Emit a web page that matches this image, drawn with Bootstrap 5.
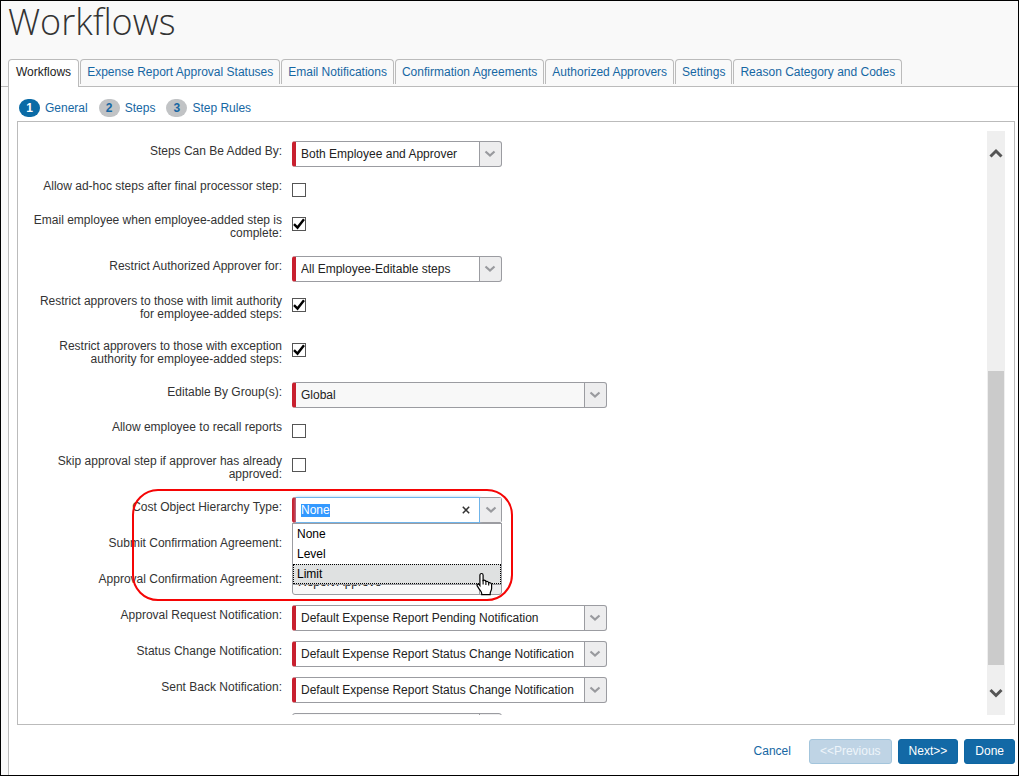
<!DOCTYPE html>
<html lang="en">
<head>
<meta charset="utf-8">
<meta name="viewport" content="width=device-width, initial-scale=1">
<title>Workflows</title>
<link href="https://cdn.jsdelivr.net/npm/bootstrap@5.3.0/dist/css/bootstrap.min.css" rel="stylesheet">
<style>
  body { font-family: "Liberation Sans", Arial, sans-serif; font-size: 12px; line-height: 13px; color: #333; background: #f9f9f9; }
  a { color: #1667a3; text-decoration: none; }
  .app-frame { border: 1px solid #000; }
  .page-title { font-family: "Open Sans", sans-serif; font-weight: 300; font-size: 36px; line-height: 42px; color: #333; padding: 0 7px; margin: 0 0 16px; }
  .nav-tabs { --bs-nav-tabs-border-width: 0; padding-left: 7px; gap: 1px; border-bottom: 1px solid #bbb; }
  .nav-tabs .nav-link { border: 1px solid #bbb; border-bottom: 0; border-radius: 4px 4px 0 0; padding: 6px 6px 5px; margin: 0 0 2px; color: #1667a3; background: #f9f9f9; }
  .nav-tabs .nav-link.active { color: #222; background: #fff; margin-bottom: -1px; padding: 6px 7px 8px; border-color: #bbb; }
  .tab-body { margin-left: 7px; border-left: 1px solid #bbb; background: #fff; padding: 12px 3px 11px 8px; }
  .wizard-steps { gap: 11px; padding-left: 2px; margin-bottom: 4px; }
  .step-num { width: 21px; height: 18px; line-height: 18px; border-radius: 9px; background: #c1c3c5; font-weight: 700; text-align: center; margin-right: 5px; }
  .current .step-num { background: #0a6ba6; color: #fff; }
  .form-panel { border: 1px solid #bbb; padding: 9px 9px 9px 12px; }
  .form-scroll { flex: 1 1 0; min-height: 0; }
  .fields { padding-top: 10px; }
  .field-row { min-height: 36px; gap: 10px; }
  .tick-row { min-height: 34px; }
  .tall-row { min-height: 45px; }
  .field-name { width: 252px; flex: none; text-align: right; padding-top: 4px; }
  .tick-row .field-name { padding-top: 3px; }
  .pick { appearance: none; height: 26px; width: 210px; border: 1px solid #9b9ca1; border-radius: 3px; padding: 0 26px 0 5px; color: #222; outline: 0;
    background: url("data:image/svg+xml,%3Csvg xmlns='http://www.w3.org/2000/svg' width='12' height='8'%3E%3Cpath d='M1.5 1.5 6 5.5 10.5 1.5' fill='none' stroke='%23999a9e' stroke-width='2.2'/%3E%3C/svg%3E") right 5px center no-repeat,
      linear-gradient(90deg, #9b9ca1 1px, #ededee 1px) right / 22px 100% no-repeat, #fff; }
  .pick-wide { width: 315px; }
  .required { border-left: 4px solid #c8202f; padding-left: 5px; }
  .pick-locked { background-color: #f8f8f8; }
  .tick { appearance: none; width: 14px; height: 14px; border: 1px solid #555; background: #fff; margin: 6px 0 0; }
  .tick:checked { background: url("data:image/svg+xml,%3Csvg xmlns='http://www.w3.org/2000/svg' width='12' height='12'%3E%3Cpath d='M1 6.2 4.5 9.6 11 1.2' fill='none' stroke='%23000' stroke-width='2.4'/%3E%3C/svg%3E") center no-repeat #fff; }
  .combo { width: 210px; height: 26px; border: 1px solid #9b9ca1; border-left: 4px solid #c8202f; border-radius: 3px; }
  .combo-box { border: 1px solid #6fb4ea; border-left: 0; margin: -1px 0; box-shadow: 0 0 3px #9fcdf0; background: #fff; min-width: 0; }
  .combo-box input { border: 0; outline: 0; padding: 0 0 0 5px; width: 100%; min-width: 0; color: #222; caret-color: transparent; background: transparent; }
  .combo-box input::selection { background: #3399ff; color: #fff; }
  .combo button { border: 0; padding: 0; background: none; flex: none; }
  .combo .combo-clear { width: 26px; }
  .combo .combo-open { width: 21px; background: #ededee; }
  .choices { top: 26px; left: 0; width: 210px; z-index: 2; background: #fff; border: 1px solid #9b9ca1; color: #000; }
  .choices li { line-height: 19px; padding: 1px 4px 0; height: 20px; }
  .choices li.hovered { background: #dfe1e1; outline: 1px dotted #000; outline-offset: -1px; }
  .hand { left: 184px; top: 75px; z-index: 4; }
  .callout { left: 102px; top: -8px; width: 381px; height: 112px; border: 2px solid #f50505; border-radius: 26px; z-index: 3; pointer-events: none; }
  .scroll-track { width: 18px; background: #efefef; }
  .scroll-thumb { left: 1px; width: 16px; background: #cbcbcb; }
  .actions { gap: 6px; padding-top: 14px; }
  .actions a { margin-right: 12px; }
  .actions .btn { --bs-btn-font-size: 12px; --bs-btn-line-height: 13px; --bs-btn-padding-x: 10px; --bs-btn-padding-y: 5px; --bs-btn-border-radius: 3px; --bs-btn-bg: #1369a6; --bs-btn-border-color: #0d66a2; --bs-btn-color: #fff;
    --bs-btn-disabled-bg: #bfd4e5; --bs-btn-disabled-border-color: #a3c5dc; --bs-btn-disabled-color: #eef5fa; --bs-btn-disabled-opacity: 1; }
</style>
</head>
<body>
<div class="app-frame d-flex flex-column min-vh-100">
  <header>
    <h1 class="page-title">Workflows</h1>
    <ul class="nav nav-tabs">
      <li class="nav-item"><a class="nav-link active" href="#">Workflows</a></li>
      <li class="nav-item"><a class="nav-link" href="#">Expense Report Approval Statuses</a></li>
      <li class="nav-item"><a class="nav-link" href="#">Email Notifications</a></li>
      <li class="nav-item"><a class="nav-link" href="#">Confirmation Agreements</a></li>
      <li class="nav-item"><a class="nav-link" href="#">Authorized Approvers</a></li>
      <li class="nav-item"><a class="nav-link" href="#">Settings</a></li>
      <li class="nav-item"><a class="nav-link" href="#">Reason Category and Codes</a></li>
    </ul>
  </header>
  <main class="tab-body d-flex flex-column flex-grow-1">
    <nav class="wizard-steps d-flex">
      <a class="current d-flex align-items-center" href="#"><span class="step-num">1</span>General</a>
      <a class="d-flex align-items-center" href="#"><span class="step-num">2</span>Steps</a>
      <a class="d-flex align-items-center" href="#"><span class="step-num">3</span>Step Rules</a>
    </nav>
    <section class="form-panel d-flex flex-grow-1">
      <div class="d-flex flex-column flex-grow-1">
      <form class="form-scroll overflow-hidden">
        <div class="fields">
          <div class="field-row d-flex align-items-start"><label class="field-name" for="addedBy">Steps Can Be Added By:</label><select class="pick required" id="addedBy"><option>Both Employee and Approver</option></select></div>
          <div class="field-row tick-row d-flex align-items-start"><label class="field-name" for="adhoc">Allow ad-hoc steps after final processor step:</label><input class="tick" type="checkbox" id="adhoc"></div>
          <div class="field-row tick-row tall-row d-flex align-items-start"><label class="field-name" for="emailDone">Email employee when employee-added step is complete:</label><input class="tick" type="checkbox" id="emailDone" checked></div>
          <div class="field-row d-flex align-items-start"><label class="field-name" for="restrictFor">Restrict Authorized Approver for:</label><select class="pick required" id="restrictFor"><option>All Employee-Editable steps</option></select></div>
          <div class="field-row tick-row tall-row d-flex align-items-start"><label class="field-name" for="limitAuth">Restrict approvers to those with limit authority for employee-added steps:</label><input class="tick" type="checkbox" id="limitAuth" checked></div>
          <div class="field-row tick-row tall-row d-flex align-items-start"><label class="field-name" for="excAuth">Restrict approvers to those with exception authority for employee-added steps:</label><input class="tick" type="checkbox" id="excAuth" checked></div>
          <div class="field-row d-flex align-items-start"><label class="field-name" for="groups">Editable By Group(s):</label><select class="pick pick-wide required pick-locked" id="groups"><option>Global</option></select></div>
          <div class="field-row tick-row d-flex align-items-start"><label class="field-name" for="recall">Allow employee to recall reports</label><input class="tick" type="checkbox" id="recall"></div>
          <div class="field-row tick-row tall-row d-flex align-items-start"><label class="field-name" for="skip">Skip approval step if approver has already approved:</label><input class="tick" type="checkbox" id="skip"></div>
          <div class="position-relative">
            <div class="field-row d-flex align-items-start">
              <label class="field-name" for="hierarchy">Cost Object Hierarchy Type:</label>
              <div class="position-relative">
                <div class="combo d-flex">
                  <div class="combo-box d-flex flex-grow-1">
                    <input type="text" id="hierarchy" value="None" autocomplete="off">
                    <button class="combo-clear" type="button" aria-label="Clear"><svg width="8" height="8" viewBox="0 0 8 8"><path d="M.8.8 7.2 7.2M7.2.8.8 7.2" stroke="#333" stroke-width="1.5"/></svg></button>
                  </div>
                  <button class="combo-open" type="button" aria-label="Open list"><svg width="12" height="8" viewBox="0 0 12 8"><path d="M1.5 1.5 6 5.5 10.5 1.5" fill="none" stroke="#999a9e" stroke-width="2.2"/></svg></button>
                </div>
                <ul class="choices position-absolute list-unstyled mb-0">
                  <li>None</li>
                  <li>Level</li>
                  <li class="hovered">Limit</li>
                </ul>
                <svg class="hand position-absolute" width="18" height="24" viewBox="0 0 18 24"><path d="M5.500 1.500c1.100 0 1.600.8 1.600 1.800v5.200c1-.6 2.600-.2 2.800 1 1.100-.5 2.500 0 2.700 1.200 1.400-.4 3 .4 3 2.100v3.700c0 2-1.400 3-1.400 5v1.200H5.700v-1.200c0-1.700-1.500-2.700-2.300-4.200L1.200 13.900c-.6-1.400.9-2.500 2-1.300l.7.900V3.300c0-1 .6-1.800 1.600-1.800z" fill="#fff" stroke="#000" stroke-width="1.200"/><path d="M7.100 8v4.500M9.900 9.500v3.500M12.700 10.700v2.800" stroke="#000" stroke-width="1.100"/></svg>
              </div>
            </div>
            <div class="field-row d-flex align-items-start"><label class="field-name" for="submitAgr">Submit Confirmation Agreement:</label><select class="pick" id="submitAgr"><option></option></select></div>
            <div class="field-row d-flex align-items-start"><label class="field-name" for="apprAgr">Approval Confirmation Agreement:</label><select class="pick pick-locked" id="apprAgr"><option>Report Approve</option></select></div>
            <div class="callout position-absolute"></div>
          </div>
          <div class="field-row d-flex align-items-start"><label class="field-name" for="reqNote">Approval Request Notification:</label><select class="pick pick-wide required" id="reqNote"><option>Default Expense Report Pending Notification</option></select></div>
          <div class="field-row d-flex align-items-start"><label class="field-name" for="statNote">Status Change Notification:</label><select class="pick pick-wide required" id="statNote"><option>Default Expense Report Status Change Notification</option></select></div>
          <div class="field-row d-flex align-items-start"><label class="field-name" for="backNote">Sent Back Notification:</label><select class="pick pick-wide required" id="backNote"><option>Default Expense Report Status Change Notification</option></select></div>
          <div class="field-row d-flex align-items-start"><span class="field-name"></span><select class="pick pick-locked" aria-label="Next notification"><option></option></select></div>
        </div>
      </form>
      </div>
      <div class="scroll-track position-relative d-flex flex-column justify-content-between align-items-center py-3">
        <svg width="14" height="12" viewBox="0 0 14 12"><path d="M1.500 9.500 7 4l5.500 5.500" fill="none" stroke="#555" stroke-width="3"/></svg>
        <div class="scroll-thumb position-absolute" style="top:41.1%;height:50.3%"></div>
        <svg width="14" height="12" viewBox="0 0 14 12"><path d="M1.500 3 7 8.500 12.500 3" fill="none" stroke="#555" stroke-width="3"/></svg>
      </div>
    </section>
    <footer class="actions d-flex justify-content-end align-items-center">
      <a href="#">Cancel</a>
      <button class="btn" type="button" disabled>&lt;&lt;Previous</button>
      <button class="btn" type="button">Next&gt;&gt;</button>
      <button class="btn" type="button">Done</button>
    </footer>
  </main>
</div>
<script src="https://cdn.jsdelivr.net/npm/bootstrap@5.3.0/dist/js/bootstrap.bundle.min.js"></script>
<script>
  document.getElementById('hierarchy').select();
</script>
</body>
</html>
